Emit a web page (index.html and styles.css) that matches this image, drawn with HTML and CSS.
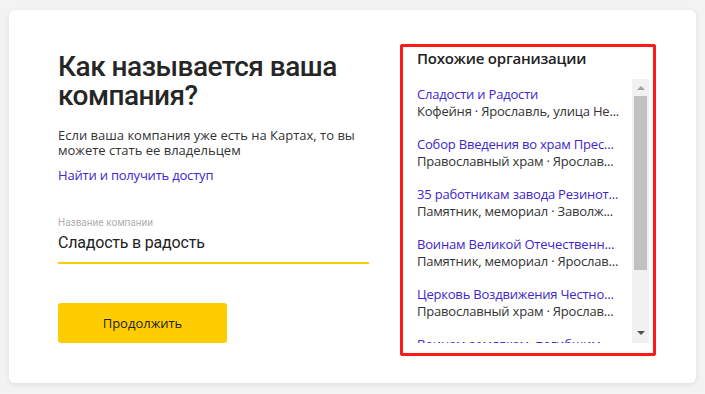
FILE: index.html
```html
<!DOCTYPE html>
<html lang="ru">
<head>
<meta charset="utf-8">
<title>Как называется ваша компания?</title>
<link rel="stylesheet" href="styles.css">
</head>
<body>
<div class="card">
  <div class="left">
    <h1 class="title">Как называется ваша компания?</h1>
    <p class="lead">Если ваша компания уже есть на Картах, то вы можете стать ее владельцем</p>
    <a class="link" href="#">Найти и получить доступ</a>
    <label class="field">
      <span class="field-label">Название компании</span>
      <span class="field-input">Сладость в радость</span>
    </label>
    <button class="btn" type="button">Продолжить</button>
  </div>
  <div class="similar">
    <div class="similar-title">Похожие организации</div>
    <div class="scroller">
      <ul class="list">
        <li class="item"><a class="item-name" href="#">Сладости и Радости</a><div class="item-desc">Кофейня · Ярославль, улица Не...</div></li>
        <li class="item"><a class="item-name" href="#">Собор Введения во храм Прес...</a><div class="item-desc">Православный храм · Ярослав...</div></li>
        <li class="item"><a class="item-name" href="#">35 работникам завода Резинот...</a><div class="item-desc">Памятник, мемориал · Заволж...</div></li>
        <li class="item"><a class="item-name" href="#">Воинам Великой Отечественн...</a><div class="item-desc">Памятник, мемориал · Ярослав...</div></li>
        <li class="item"><a class="item-name" href="#">Церковь Воздвижения Честно...</a><div class="item-desc">Православный храм · Ярослав...</div></li>
        <li class="item"><a class="item-name" href="#">Воинам-землякам, погибшим...</a></li>
      </ul>
      <div class="sbar">
        <span class="sbar-up"></span>
        <span class="sbar-thumb"></span>
        <span class="sbar-down"></span>
      </div>
    </div>
  </div>
</div>
</body>
</html>
```
FILE: styles.css
```css
html, body {
  margin: 0;
  padding: 0;
}
body {
  background: #f3f3f3;
  font-family: "Open Sans", "Noto Sans", sans-serif;
  color: #222;
  padding: 10px 9px 0 9px;
  height: 394px;
  box-sizing: border-box;
}
.card {
  width: 687px;
  height: 373px;
  box-sizing: border-box;
  background: #fff;
  border-radius: 6px;
  box-shadow: 0 2px 6px rgba(0, 0, 0, 0.08);
  padding: 34px 40px 27px 49px;
  display: grid;
  grid-template-columns: 311px 256px;
  column-gap: 31px;
}
.left {
  display: flex;
  flex-direction: column;
  align-items: flex-start;
  padding-top: 8px;
}
.title {
  margin: 0;
  font-family: Roboto, "Open Sans", sans-serif;
  font-size: 28px;
  line-height: 29px;
  font-weight: 500;
  letter-spacing: -0.5px;
  color: #262626;
}
.lead {
  margin: 18px 0 0;
  font-size: 13px;
  line-height: 15px;
  color: #333;
}
.link {
  margin-top: 10px;
  font-size: 13px;
  line-height: 15px;
  letter-spacing: -0.2px;
  color: #4026cc;
  text-decoration: none;
}
.field {
  margin-top: 34px;
  display: flex;
  flex-direction: column;
  align-self: stretch;
}
.field-label {
  font-family: Roboto, "Open Sans", sans-serif;
  font-size: 10px;
  line-height: 12px;
  color: #b0b0b0;
}
.field-input {
  margin-top: 3px;
  font-family: Roboto, "Open Sans", sans-serif;
  font-size: 16px;
  line-height: 22px;
  letter-spacing: -0.2px;
  color: #222;
  padding-bottom: 8px;
  border-bottom: 2px solid #ffcc00;
}
.btn {
  margin-top: 39px;
  width: 169px;
  height: 40px;
  border: 0;
  border-radius: 3px;
  background: #ffcc00;
  font-family: inherit;
  font-size: 13px;
  color: #222;
  padding: 0;
}
.similar {
  border: 3px solid #ff1a1a;
  border-radius: 2px;
  height: 312px;
  box-sizing: border-box;
  padding: 1px 4px 10px 14px;
  display: flex;
  flex-direction: column;
}
.similar-title {
  font-size: 15px;
  line-height: 20px;
  font-weight: 600;
  letter-spacing: -0.2px;
  color: #222;
  margin-bottom: 11px;
}
.scroller {
  flex: 1;
  display: flex;
  min-height: 0;
}
.list {
  flex: 1;
  list-style: none;
  margin: 0;
  padding: 7px 0 0;
  overflow: hidden;
  display: flex;
  flex-direction: column;
  gap: 16px;
}
.item {
  font-size: 13px;
  line-height: 17px;
  letter-spacing: -0.2px;
  white-space: nowrap;
  overflow: hidden;
  flex: none;
}
.item-name {
  color: #4026cc;
  text-decoration: none;
  display: block;
}
.item-desc {
  color: #333;
}
.sbar {
  width: 17px;
  background: #f1f1f1;
  display: flex;
  flex-direction: column;
  align-items: center;
  flex: none;
}
.sbar-up, .sbar-down {
  width: 0;
  height: 0;
  border-left: 4px solid transparent;
  border-right: 4px solid transparent;
  flex: none;
}
.sbar-up {
  border-bottom: 4px solid #a3a3a3;
  margin-top: 7px;
}
.sbar-thumb {
  width: 13px;
  height: 174px;
  background: #c1c1c1;
  margin-top: 6px;
  flex: none;
}
.sbar-down {
  border-top: 4px solid #505050;
  margin-top: auto;
  margin-bottom: 8px;
}
```
